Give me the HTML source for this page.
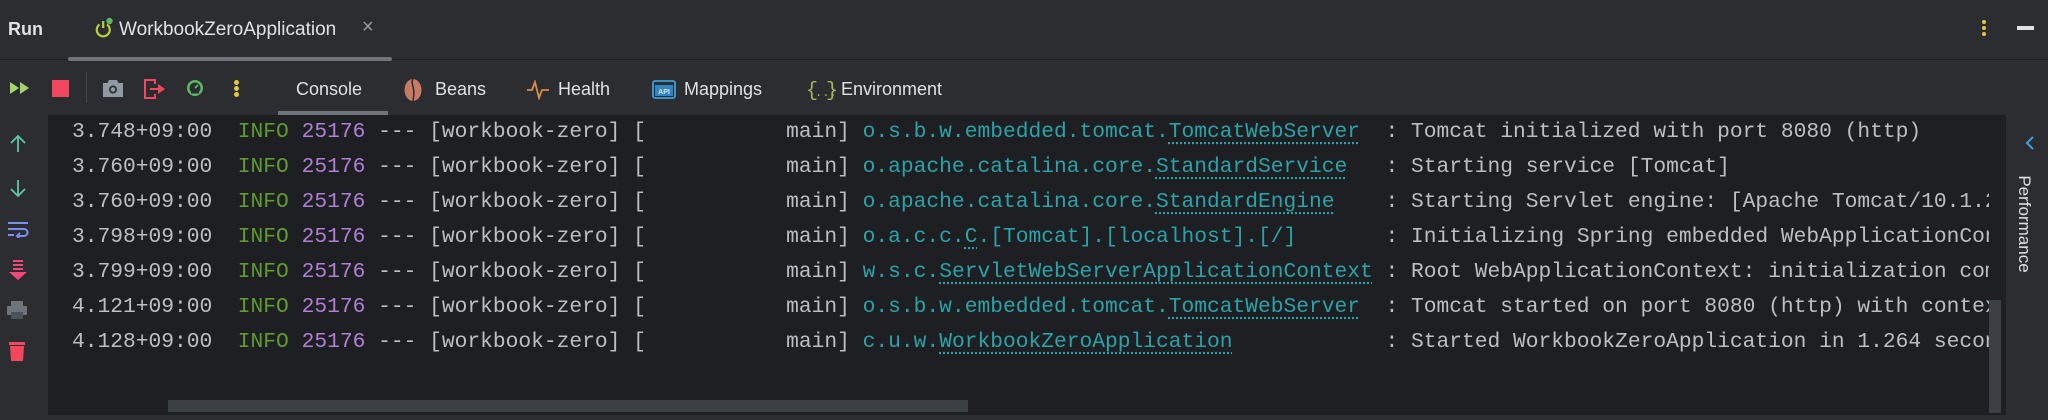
<!DOCTYPE html>
<html><head><meta charset="utf-8"><style>
*{margin:0;padding:0;box-sizing:border-box}
body{width:2048px;height:420px;overflow:hidden;background:#2b2d30;font-family:"Liberation Sans",sans-serif;position:relative;color:#dfe1e5}
.abs{position:absolute}
.mono{font-family:"Liberation Mono",monospace;font-size:21.25px;white-space:pre;color:#bcbec4;line-height:35px}
.g{color:#5f9b2f}.p{color:#b07fd6}.t{color:#2aa3a8}
.u{text-decoration:underline dotted #2aa3a8;text-underline-offset:5px}
.tab{position:absolute;top:79px;font-size:18px;color:#dfe1e5}
</style></head><body>
<div class="abs" style="left:0;top:0;width:2048px;height:60px;background:#2b2d30;border-bottom:1px solid #1e1f22"></div>
<div class="abs" style="left:8px;top:19px;font-size:18px;font-weight:bold;color:#dfe1e5">Run</div>
<svg class="abs" style="left:92px;top:16px" width="24" height="24" viewBox="0 0 24 24"><path d="M7.5 8.5a6.5 6.5 0 1 0 7.5 0" stroke="#b8d235" stroke-width="2.2" fill="none"/><line x1="11.2" y1="5" x2="11.2" y2="12" stroke="#b8d235" stroke-width="2.2"/><circle cx="17.5" cy="5" r="3.2" fill="#5fb865"/></svg>
<div class="abs" style="left:119px;top:19px;font-size:19px;color:#dfe1e5">WorkbookZeroApplication</div>
<div class="abs" style="left:362px;top:16px;font-size:20px;color:#9a9ca2">×</div>
<div class="abs" style="left:68px;top:57px;width:324px;height:4px;border-radius:2px;background:#6f737a"></div>
<div class="abs" style="left:1982px;top:20px;width:4px;height:4px;border-radius:2px;background:#e6c730;box-shadow:0 6px #e6c730,0 12px #e6c730"></div>
<div class="abs" style="left:2017px;top:26px;width:17px;height:4px;background:#dfe1e5"></div>
<svg class="abs" style="left:10px;top:82px" width="20" height="12"><path d="M0 0L9 6L0 12ZM10 0L19 6L10 12Z" fill="#a5d36b"/></svg>
<div class="abs" style="left:52px;top:80px;width:17px;height:17px;background:#f2475f"></div>
<div class="abs" style="left:86px;top:72px;width:1px;height:31px;background:#43454a"></div>
<svg class="abs" style="left:102px;top:78px" width="22" height="20"><path d="M7 2h8l1.5 3H21v14H1V5h4.5Z" fill="#8f9aa3"/><circle cx="11" cy="11.5" r="4" fill="#2b2d30"/><circle cx="11" cy="11.5" r="2.3" fill="#8f9aa3"/></svg>
<svg class="abs" style="left:143px;top:78px" width="24" height="22"><path d="M12 6V2H2v18h10v-4" stroke="#f2475f" stroke-width="2" fill="none"/><path d="M7 10h8V6l7 5-7 5v-4H7Z" fill="#f2475f"/></svg>
<svg class="abs" style="left:186px;top:79px" width="18" height="18"><circle cx="9" cy="9" r="8" fill="#5fb865"/><circle cx="9" cy="9" r="5.5" fill="#2b2d30"/><path d="M5 13h8" stroke="#2b2d30" stroke-width="3"/><path d="M9 9l3-3" stroke="#5fb865" stroke-width="1.8"/></svg>
<div class="abs" style="left:234px;top:80px;width:5px;height:5px;border-radius:3px;background:#e6c730;box-shadow:0 6px #e6c730,0 12px #e6c730"></div>
<div class="tab" style="left:296px">Console</div>
<div class="abs" style="left:278px;top:111px;width:110px;height:4px;background:#6f737a"></div>
<svg class="abs" style="left:403px;top:78px" width="20" height="24"><ellipse cx="10" cy="12" rx="8.5" ry="11" fill="#c77b64"/><path d="M10 1c-3 5 3 8 0 22" stroke="#2b2d30" stroke-width="1.5" fill="none"/></svg>
<div class="tab" style="left:435px">Beans</div>
<svg class="abs" style="left:526px;top:80px" width="24" height="20"><path d="M1 10h5l3-8 4 16 3-8h7" stroke="#d98b4c" stroke-width="1.8" fill="none"/></svg>
<div class="tab" style="left:558px">Health</div>
<svg class="abs" style="left:652px;top:80px" width="24" height="20"><rect x="1" y="1" width="22" height="17" rx="2" stroke="#3d9fe0" stroke-width="1.8" fill="none"/><rect x="3" y="5" width="18" height="11" fill="#2f86c6"/><text x="12" y="14" font-size="7" font-family="Liberation Sans" fill="#dfe1e5" text-anchor="middle" font-weight="bold">API</text></svg>
<div class="tab" style="left:684px">Mappings</div>
<svg class="abs" style="left:806px;top:77px" width="30" height="26"><text x="0" y="19" font-size="20" font-family="Liberation Mono" fill="#a3b85d">{</text><text x="9" y="19" font-size="12" font-family="Liberation Mono" fill="#a3b85d">...</text><text x="20" y="19" font-size="20" font-family="Liberation Mono" fill="#a3b85d" textLength="10">}</text></svg>
<div class="tab" style="left:841px">Environment</div>
<div class="abs" style="left:0;top:115px;width:48px;height:300px;background:#2b2d30"></div>
<div class="abs" style="left:48px;top:115px;width:1957px;height:300px;background:#1e1f22;overflow:hidden">
<div class="mono abs" style="left:24px;top:0px">3.748+09:00  <span class="g">INFO</span> <span class="p">25176</span> --- [workbook-zero] [           main] <span class="t">o.s.b.w.embedded.tomcat.<span class="u">TomcatWebServer</span></span>  : Tomcat initialized with port 8080 (http)
3.760+09:00  <span class="g">INFO</span> <span class="p">25176</span> --- [workbook-zero] [           main] <span class="t">o.apache.catalina.core.<span class="u">StandardService</span></span>   : Starting service [Tomcat]
3.760+09:00  <span class="g">INFO</span> <span class="p">25176</span> --- [workbook-zero] [           main] <span class="t">o.apache.catalina.core.<span class="u">StandardEngine</span></span>    : Starting Servlet engine: [Apache Tomcat/10.1.28]
3.798+09:00  <span class="g">INFO</span> <span class="p">25176</span> --- [workbook-zero] [           main] <span class="t">o.a.c.c.<span class="u">C</span>.[Tomcat].[localhost].[/]</span>       : Initializing Spring embedded WebApplicationContext
3.799+09:00  <span class="g">INFO</span> <span class="p">25176</span> --- [workbook-zero] [           main] <span class="t">w.s.c.<span class="u">ServletWebServerApplicationContext</span></span> : Root WebApplicationContext: initialization completed
4.121+09:00  <span class="g">INFO</span> <span class="p">25176</span> --- [workbook-zero] [           main] <span class="t">o.s.b.w.embedded.tomcat.<span class="u">TomcatWebServer</span></span>  : Tomcat started on port 8080 (http) with context path
4.128+09:00  <span class="g">INFO</span> <span class="p">25176</span> --- [workbook-zero] [           main] <span class="t">c.u.w.<span class="u">WorkbookZeroApplication</span></span>            : Started WorkbookZeroApplication in 1.264 seconds</div>
<div class="abs" style="left:1941px;top:0;width:16px;height:300px;background:#1e1f22"></div>
<div class="abs" style="left:1941px;top:185px;width:12px;height:113px;background:#3c3f44"></div>
<div class="abs" style="left:120px;top:285px;width:800px;height:12px;background:#3c3f44"></div>
</div>
<div class="abs" style="left:0;top:415px;width:2048px;height:5px;background:#2b2d30"></div>
<svg class="abs" style="left:8px;top:134px" width="20" height="20"><path d="M10 18V2M3 9l7-7 7 7" stroke="#5fc7a4" stroke-width="1.8" fill="none"/></svg>
<svg class="abs" style="left:8px;top:178px" width="20" height="20"><path d="M10 2v16M3 11l7 7 7-7" stroke="#5fc7a4" stroke-width="1.8" fill="none"/></svg>
<svg class="abs" style="left:7px;top:220px" width="22" height="18"><path d="M1 3h20M1 9h16a3.5 3.5 0 0 1 0 7h-5M1 15h6" stroke="#7b8ff0" stroke-width="2" fill="none"/><path d="M13 13l-3 3 3 3" stroke="#7b8ff0" stroke-width="2" fill="none"/></svg>
<svg class="abs" style="left:8px;top:260px" width="20" height="22"><path d="M5 1h10M5 5h10M5 9h10" stroke="#f2477a" stroke-width="2"/><path d="M1 12h18l-9 8Z" fill="#f2477a"/></svg>
<svg class="abs" style="left:6px;top:300px" width="22" height="20"><rect x="5" y="1" width="12" height="5" fill="#6f737a"/><rect x="1" y="6" width="20" height="9" rx="1" fill="#6f737a"/><rect x="5" y="12" width="12" height="7" fill="#4e5157"/></svg>
<svg class="abs" style="left:8px;top:340px" width="18" height="22"><rect x="1" y="2" width="16" height="3" fill="#f2475f"/><path d="M2 6h14l-1 15H3Z" fill="#f2475f"/></svg>
<div class="abs" style="left:2005px;top:117px;width:43px;height:298px;background:#2b2d30;border-left:1px solid #1e1f22"></div>
<svg class="abs" style="left:2025px;top:136px" width="10" height="14"><path d="M8 1L2 7l6 6" stroke="#3d9fe0" stroke-width="2" fill="none"/></svg>
<div class="abs" style="left:2015px;top:214px;width:110px;font-size:17px;color:#dfe1e5;transform:translate(-46px,0) rotate(90deg);transform-origin:center;text-align:center;line-height:20px">Performance</div>
</body></html>
